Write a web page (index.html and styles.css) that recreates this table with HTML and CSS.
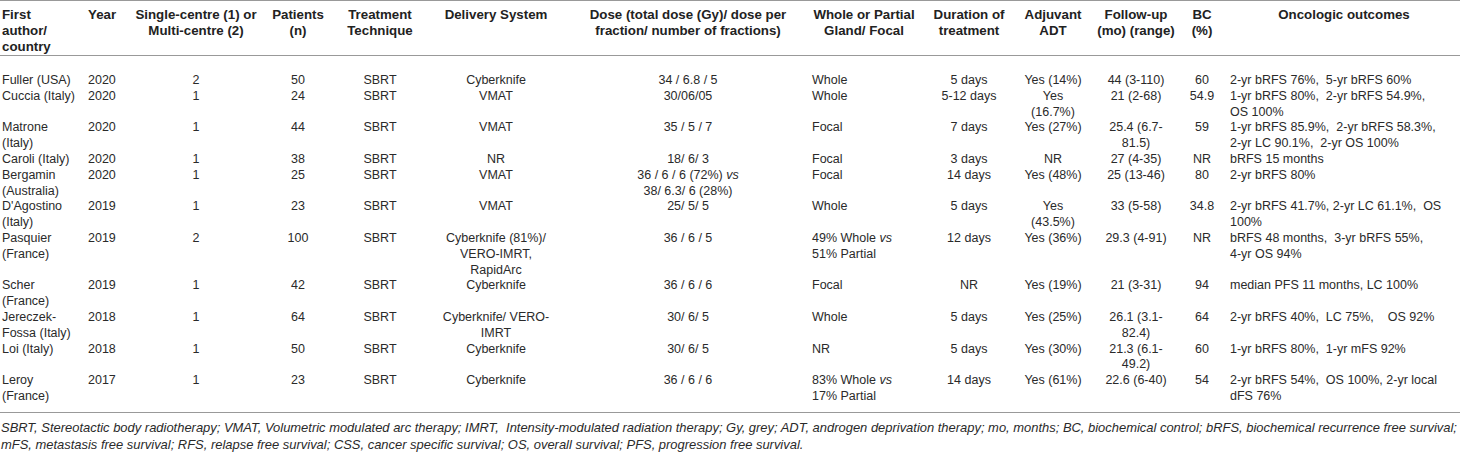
FILE: index.html
```html
<!DOCTYPE html>
<html>
<head>
<meta charset="utf-8">
<link rel="stylesheet" href="styles.css">
</head>
<body>
<div class="page">
<table class="tbl">
<colgroup>
<col class="c1"><col class="c2"><col class="c3"><col class="c4"><col class="c5"><col class="c6"><col class="c7"><col class="c8"><col class="c9"><col class="c10"><col class="c11"><col class="c12"><col class="c13">
</colgroup>
<thead>
<tr>
<th class="l">First<br>author/<br>country</th>
<th class="l">Year</th>
<th>Single-centre (1) or<br>Multi-centre (2)</th>
<th>Patients<br>(n)</th>
<th>Treatment<br>Technique</th>
<th>Delivery System</th>
<th>Dose (total dose (Gy)/ dose per<br>fraction/ number of fractions)</th>
<th>Whole or Partial<br>Gland/ Focal</th>
<th>Duration of<br>treatment</th>
<th>Adjuvant<br>ADT</th>
<th>Follow-up<br>(mo) (range)</th>
<th>BC<br>(%)</th>
<th class="onc">Oncologic outcomes</th>
</tr>
</thead>
<tbody>
<tr class="first">
<td class="l">Fuller (USA)</td><td class="l">2020</td><td>2</td><td>50</td><td>SBRT</td><td>Cyberknife</td><td>34 / 6.8 / 5</td><td class="l">Whole</td><td>5 days</td><td>Yes (14%)</td><td>44 (3-110)</td><td>60</td><td class="l onc">2-yr bRFS 76%,&nbsp; 5-yr bRFS 60%</td>
</tr>
<tr>
<td class="l">Cuccia (Italy)</td><td class="l">2020</td><td>1</td><td>24</td><td>SBRT</td><td>VMAT</td><td>30/06/05</td><td class="l">Whole</td><td>5-12 days</td><td>Yes<br>(16.7%)</td><td>21 (2-68)</td><td>54.9</td><td class="l onc">1-yr bRFS 80%,&nbsp; 2-yr bRFS 54.9%,<br>OS 100%</td>
</tr>
<tr>
<td class="l">Matrone<br>(Italy)</td><td class="l">2020</td><td>1</td><td>44</td><td>SBRT</td><td>VMAT</td><td>35 / 5 / 7</td><td class="l">Focal</td><td>7 days</td><td>Yes (27%)</td><td>25.4 (6.7-<br>81.5)</td><td>59</td><td class="l onc">1-yr bRFS 85.9%,&nbsp; 2-yr bRFS 58.3%,<br>2-yr LC 90.1%,&nbsp; 2-yr OS 100%</td>
</tr>
<tr>
<td class="l">Caroli (Italy)</td><td class="l">2020</td><td>1</td><td>38</td><td>SBRT</td><td>NR</td><td>18/ 6/ 3</td><td class="l">Focal</td><td>3 days</td><td>NR</td><td>27 (4-35)</td><td>NR</td><td class="l onc">bRFS 15 months</td>
</tr>
<tr>
<td class="l">Bergamin<br>(Australia)</td><td class="l">2020</td><td>1</td><td>25</td><td>SBRT</td><td>VMAT</td><td>36 / 6 / 6 (72%) <i>vs</i><br>38/ 6.3/ 6 (28%)</td><td class="l">Focal</td><td>14 days</td><td>Yes (48%)</td><td>25 (13-46)</td><td>80</td><td class="l onc">2-yr bRFS 80%</td>
</tr>
<tr>
<td class="l">D'Agostino<br>(Italy)</td><td class="l">2019</td><td>1</td><td>23</td><td>SBRT</td><td>VMAT</td><td>25/ 5/ 5</td><td class="l">Whole</td><td>5 days</td><td>Yes<br>(43.5%)</td><td>33 (5-58)</td><td>34.8</td><td class="l onc">2-yr bRFS 41.7%, 2-yr LC 61.1%,&nbsp; OS<br>100%</td>
</tr>
<tr>
<td class="l">Pasquier<br>(France)</td><td class="l">2019</td><td>2</td><td>100</td><td>SBRT</td><td>Cyberknife (81%)/<br>VERO-IMRT,<br>RapidArc</td><td>36 / 6 / 5</td><td class="l">49% Whole <i>vs</i><br>51% Partial</td><td>12 days</td><td>Yes (36%)</td><td>29.3 (4-91)</td><td>NR</td><td class="l onc">bRFS 48 months,&nbsp; 3-yr bRFS 55%,<br>4-yr OS 94%</td>
</tr>
<tr>
<td class="l">Scher<br>(France)</td><td class="l">2019</td><td>1</td><td>42</td><td>SBRT</td><td>Cyberknife</td><td>36 / 6 / 6</td><td class="l">Focal</td><td>NR</td><td>Yes (19%)</td><td>21 (3-31)</td><td>94</td><td class="l onc">median PFS 11 months, LC 100%</td>
</tr>
<tr>
<td class="l">Jereczek-<br>Fossa (Italy)</td><td class="l">2018</td><td>1</td><td>64</td><td>SBRT</td><td>Cyberknife/ VERO-<br>IMRT</td><td>30/ 6/ 5</td><td class="l">Whole</td><td>5 days</td><td>Yes (25%)</td><td>26.1 (3.1-<br>82.4)</td><td>64</td><td class="l onc">2-yr bRFS 40%,&nbsp; LC 75%,&nbsp;&nbsp;&nbsp; OS 92%</td>
</tr>
<tr>
<td class="l">Loi (Italy)</td><td class="l">2018</td><td>1</td><td>50</td><td>SBRT</td><td>Cyberknife</td><td>30/ 6/ 5</td><td class="l">NR</td><td>5 days</td><td>Yes (30%)</td><td>21.3 (6.1-<br>49.2)</td><td>60</td><td class="l onc">1-yr bRFS 80%,&nbsp; 1-yr mFS 92%</td>
</tr>
<tr class="last">
<td class="l">Leroy<br>(France)</td><td class="l">2017</td><td>1</td><td>23</td><td>SBRT</td><td>Cyberknife</td><td>36 / 6 / 6</td><td class="l">83% Whole <i>vs</i><br>17% Partial</td><td>14 days</td><td>Yes (61%)</td><td>22.6 (6-40)</td><td>54</td><td class="l onc">2-yr bRFS 54%,&nbsp; OS 100%, 2-yr local<br>dFS 76%</td>
</tr>
</tbody>
</table>
<p class="foot">SBRT, Stereotactic body radiotherapy; VMAT, Volumetric modulated arc therapy; IMRT,&nbsp; Intensity-modulated radiation therapy; Gy, grey; ADT, androgen deprivation therapy; mo, months; BC, biochemical control; bRFS, biochemical recurrence free survival;<br>mFS, metastasis free survival; RFS, relapse free survival; CSS, cancer specific survival; OS, overall survival; PFS, progression free survival.</p>
</div>
</body>
</html>
```

FILE: styles.css
```css
html, body {
  margin: 0;
  padding: 0;
  background: #ffffff;
}
body {
  font-family: "Liberation Sans", Arial, sans-serif;
  color: #2a2a2a;
  font-size: 12.5px;
}
.page {
  width: 1460px;
}
.tbl {
  width: 1460px;
  table-layout: fixed;
  border-collapse: collapse;
  border-top: 1px solid #999;
  border-bottom: 1px solid #999;
}
.c1 { width: 86px; }
.c2 { width: 44px; }
.c3 { width: 132px; }
.c4 { width: 72px; }
.c5 { width: 92px; }
.c6 { width: 140px; }
.c7 { width: 244px; }
.c8 { width: 108px; }
.c9 { width: 102px; }
.c10 { width: 66px; }
.c11 { width: 100px; }
.c12 { width: 32px; }
.c13 { width: 242px; }
.tbl th, .tbl td {
  padding: 0 2px;
  line-height: 15.8px;
  vertical-align: top;
  text-align: center;
  white-space: nowrap;
  overflow: visible;
}
.tbl th {
  font-weight: bold;
  font-size: 13.3px;
  color: #222;
  padding-top: 6px;
  padding-bottom: 0;
  line-height: 16px;
  border-bottom: 1px solid #999;
}
.tbl .l {
  text-align: left;
}
.tbl .onc {
  padding-left: 12px;
}
.tbl tr.first td {
  padding-top: 17px;
}
.tbl tr.last td {
  padding-bottom: 7px;
}
.foot {
  margin: 6px 0 0 1px;
  font-style: italic;
  font-size: 12.95px;
  line-height: 17px;
  color: #2a2a2a;
  white-space: nowrap;
}
```
